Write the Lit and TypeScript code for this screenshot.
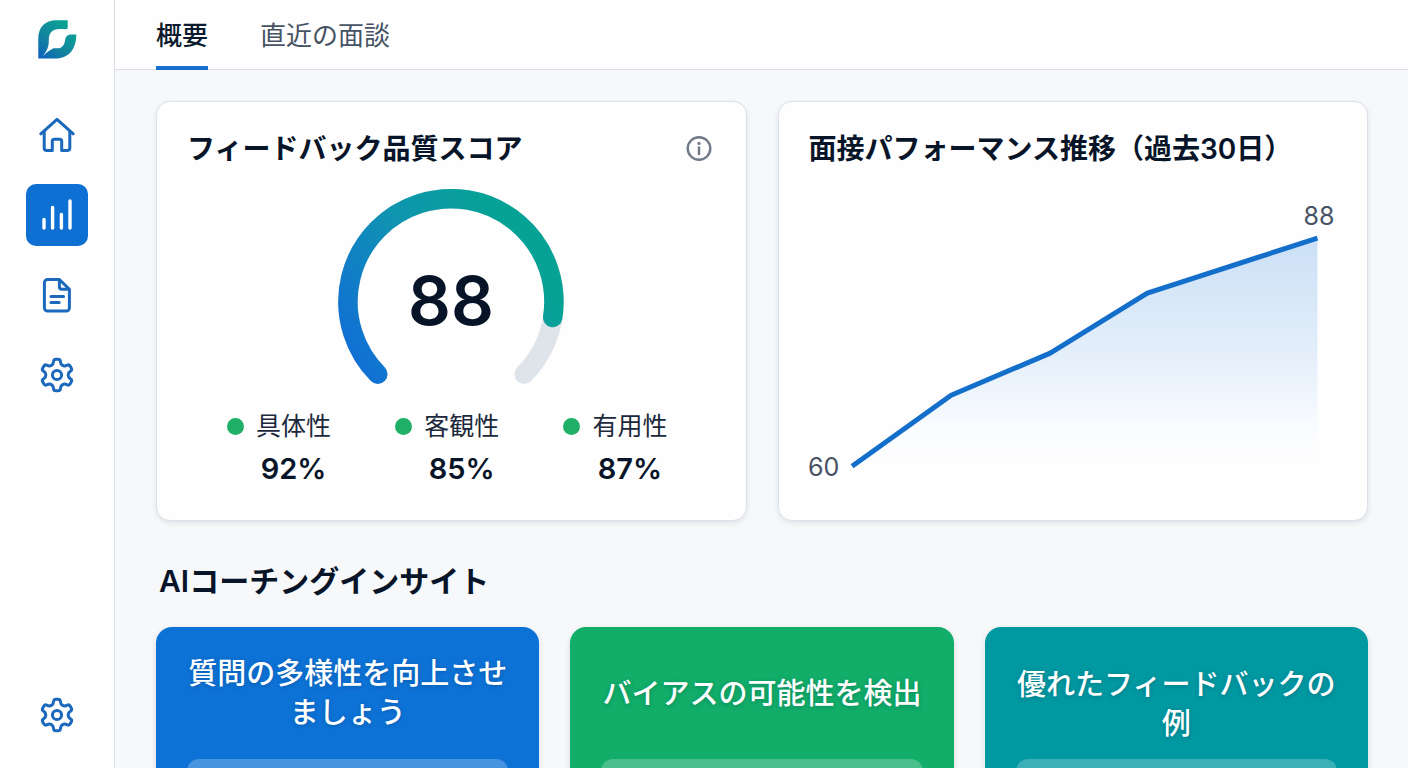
import { LitElement, html, css, svg } from "lit";
import { customElement, state } from "lit/decorators.js";
import { classMap } from "lit/directives/class-map.js";

const TOOTH_COUNT = 6;

/** Outline of a cog centred on (20, 20), with every corner rounded. */
function gearPath(): string {
  const points: [number, number][] = [];
  for (let i = 0; i < TOOTH_COUNT; i++) {
    const mid = -90 + (360 / TOOTH_COUNT) * i;
    for (const [radius, offset] of [[11.4, -18], [16.2, -12], [16.2, 12], [11.4, 18]]) {
      const a = ((mid + offset) * Math.PI) / 180;
      points.push([20 + radius * Math.cos(a), 20 + radius * Math.sin(a)]);
    }
  }
  const toward = (a: [number, number], b: [number, number], d: number) => {
    const length = Math.hypot(b[0] - a[0], b[1] - a[1]);
    const t = Math.min(d / length, 0.5);
    return `${(a[0] + (b[0] - a[0]) * t).toFixed(2)} ${(a[1] + (b[1] - a[1]) * t).toFixed(2)}`;
  };
  const n = points.length;
  return (
    points
      .map((p, i) => {
        const before = toward(p, points[(i + n - 1) % n], 2.4);
        const after = toward(p, points[(i + 1) % n], 2.4);
        return `${i ? "L" : "M"}${before}Q${p[0].toFixed(2)} ${p[1].toFixed(2)} ${after}`;
      })
      .join("") + "Z"
  );
}

const gear = svg`<path d=${gearPath()} /><circle cx="20" cy="20" r="4.6" />`;

const icons: Record<string, unknown> = {
  home: svg`<path d="M3.8 18.8 20 4.4l16.2 14.4" /><path d="M7.2 16.500v16.400a2.600 2.600 0 0 0 2.600 2.600h5.500v-9.200a2 2 0 0 1 2-2h5.400a2 2 0 0 1 2 2v9.200h5.500a2.600 2.600 0 0 0 2.600-2.600V16.500" />`,
  chart: svg`<path d="M7 33V24.5M15.6 33V12.5M24.4 33V19.5M33 33V6" />`,
  document: svg`<path d="M22.400 4.500H10.600a3.200 3.200 0 0 0-3.200 3.200v25.200a3.200 3.200 0 0 0 3.200 3.200h18.600a3.200 3.200 0 0 0 3.200-3.200V14.300zV11.700a2.600 2.600 0 0 0 2.600 2.600h7.400M14 21.500h12.600M14 27.500h8.200" />`,
  gear,
};

interface NavItem {
  id: string;
  icon: string;
  label: string;
}

const navItems: NavItem[] = [
  { id: "home", icon: "home", label: "ホーム" },
  { id: "analytics", icon: "chart", label: "分析" },
  { id: "documents", icon: "document", label: "ドキュメント" },
  { id: "preferences", icon: "gear", label: "設定" },
];

const metrics = [
  { label: "具体性", value: 92 },
  { label: "客観性", value: 85 },
  { label: "有用性", value: 87 },
];

const insights = [
  { title: "質問の多様性を向上させましょう", tone: "blue" },
  { title: "バイアスの可能性を検出", tone: "green" },
  { title: "優れたフィードバックの例", tone: "teal" },
];

@customElement("app-sidebar")
export class AppSidebar extends LitElement {
  static styles = css`
    :host {
      display: block;
      flex: none;
    }
    .rail {
      box-sizing: border-box;
      width: 115px;
      height: 100%;
      padding: 20px 0 22px;
      display: flex;
      flex-direction: column;
      align-items: center;
      background: #fefefe;
      border-right: 1px solid #d9dde5;
    }
    .logo {
      display: block;
      margin-bottom: 45px;
    }
    .list {
      flex: 1;
      display: flex;
      flex-direction: column;
      gap: 18px;
    }
    .item {
      width: 62px;
      height: 62px;
      padding: 0;
      border: 0;
      border-radius: 10px;
      background: none;
      color: #1b68bd;
      display: grid;
      place-items: center;
      cursor: pointer;
    }
    .item.active {
      background: #0f70d3;
      color: #fff;
    }
    .item.last {
      margin-top: auto;
    }
    .icon {
      width: 40px;
      height: 40px;
      fill: none;
      stroke: currentColor;
      stroke-width: 3;
      stroke-linecap: round;
      stroke-linejoin: round;
    }
    .active .icon {
      stroke-width: 3.4;
    }
  `;

  @state() private active = "analytics";

  private renderItem(item: NavItem, last = false) {
    return html`<button
      type="button"
      class=${classMap({ item: true, active: this.active === item.id, last })}
      aria-label=${item.label}
      @click=${() => (this.active = item.id)}
    >
      <svg class="icon" viewBox="0 0 40 40" aria-hidden="true">${icons[item.icon]}</svg>
    </button>`;
  }

  render() {
    return html`<nav class="rail">
      <svg class="logo" width="39" height="39" viewBox="0 0 39 39" aria-hidden="true">
        <defs>
          <linearGradient id="leaf" x1="0" y1="1" x2="0.75" y2="0.1">
            <stop offset="0" stop-color="#0b5fbe" />
            <stop offset="0.45" stop-color="#12829f" />
            <stop offset="1" stop-color="#0ba394" />
          </linearGradient>
        </defs>
        <path
          fill="url(#leaf)"
          d="M.3 38.500V18C.3 7 7.500.2 18 .2H29.700V7.500C29.700 8.500 29 9 28 9H21.500C14.500 9 10.800 13 10.800 19.500V22C10.800 27 8.500 31.500 4.800 36.500C8 32.800 11 30.500 15.500 28.300H19.500C24 28.300 26.500 25 27 20.500C27.400 16.800 29.500 14.500 33 14.500H38.300C38.300 29 31 38.500 17.500 38.500Z"
        />
      </svg>
      <div class="list">
        ${navItems.map((item) => this.renderItem(item))}
        ${this.renderItem({ id: "system", icon: "gear", label: "システム設定" }, true)}
      </div>
    </nav>`;
  }
}

@customElement("score-card")
export class ScoreCard extends LitElement {
  static styles = css`
    :host {
      display: block;
    }
    .head {
      display: flex;
      align-items: center;
      justify-content: space-between;
    }
    .title {
      margin: 0;
      font-size: 28px;
      line-height: 34px;
      font-weight: 600;
    }
    .info {
      width: 34px;
      height: 34px;
      padding: 0;
      border: 0;
      background: none;
      color: #6f7987;
      display: grid;
      place-items: center;
      cursor: pointer;
    }
    .gauge {
      display: block;
      width: 226px;
      margin: 22px auto 26px;
    }
    .score {
      font-size: 67px;
      font-weight: 600;
      text-anchor: middle;
      fill: #071428;
    }
    .metrics {
      display: flex;
      justify-content: space-between;
      margin: 0;
      padding: 0 48px 0 40px;
    }
    .metric {
      display: grid;
      grid-template-columns: 17px auto;
      column-gap: 12px;
      row-gap: 6px;
      align-items: center;
    }
    .dot {
      width: 17px;
      height: 17px;
      border-radius: 50%;
      background: #1faf66;
    }
    .name {
      font-size: 25px;
      line-height: 32px;
      color: #1c293c;
    }
    .value {
      grid-column: 2;
      margin: 0;
      text-align: center;
      font-size: 29px;
      line-height: 42px;
      font-weight: 600;
    }
  `;

  render() {
    return html`
      <div class="head">
        <h2 class="title">フィードバック品質スコア</h2>
        <button class="info" type="button" aria-label="スコアについて">
          <svg width="26" height="26" viewBox="0 0 26 26" fill="none" stroke="currentColor" stroke-width="2.4" stroke-linecap="round" aria-hidden="true">
            <circle cx="13" cy="12.500" r="11.300" />
            <path d="M13 11.500v6.500" />
            <circle cx="13" cy="7.400" r="1.600" fill="currentColor" stroke="none" />
          </svg>
        </button>
      </div>
      <svg class="gauge" viewBox="0 0 226 196" role="img" aria-label="スコア 88">
        <defs>
          <linearGradient id="arc" gradientUnits="userSpaceOnUse" x1="30" y1="190" x2="196" y2="84">
            <stop offset="0" stop-color="#1170d4" />
            <stop offset="0.55" stop-color="#0f94b0" />
            <stop offset="1" stop-color="#07a296" />
          </linearGradient>
        </defs>
        <g fill="none" stroke-width="19.5" stroke-linecap="round">
          <path stroke="#dfe3ea" d="M39.800 186.200A103 103 0 1 1 186.200 186.200" />
          <path stroke="url(#arc)" d="M39.800 186.200A103 103 0 1 1 214.700 129.500" />
        </g>
        <text class="score" x="113" y="137">88</text>
      </svg>
      <dl class="metrics">
        ${metrics.map(
          (m) => html`<div class="metric">
            <span class="dot"></span>
            <dt class="name">${m.label}</dt>
            <dd class="value">${m.value}%</dd>
          </div>`
        )}
      </dl>
    `;
  }
}

@customElement("trend-card")
export class TrendCard extends LitElement {
  static styles = css`
    :host {
      display: block;
    }
    .title {
      margin: 0;
      font-size: 28px;
      line-height: 34px;
      font-weight: 600;
    }
    .plot {
      display: block;
      width: 100%;
      margin-top: 22px;
    }
    .tick {
      font-size: 25px;
      fill: #465164;
    }
    .line {
      fill: none;
      stroke: #146fca;
      stroke-width: 5;
      stroke-linejoin: round;
    }
  `;

  render() {
    const line = "43 278 142 207 241 165 338 105 508 50";
    return html`
      <h2 class="title">面接パフォーマンス推移（過去30日）</h2>
      <svg class="plot" viewBox="0 0 528 296" role="img" aria-label="60から88へ上昇">
        <defs>
          <linearGradient id="fade" gradientUnits="userSpaceOnUse" x1="0" y1="50" x2="0" y2="278">
            <stop offset="0" stop-color="#cbe0f6" />
            <stop offset="0.5" stop-color="#e3eefa" />
            <stop offset="0.85" stop-color="#fafcff" />
            <stop offset="1" stop-color="#fefefe" />
          </linearGradient>
        </defs>
        <polygon fill="url(#fade)" points="${line} 508 278 43 278" />
        <polyline class="line" points=${line} />
        <text class="tick" x="494" y="37">88</text>
        <text class="tick" x="-1" y="288">60</text>
      </svg>
    `;
  }
}

@customElement("insight-card")
export class InsightCard extends LitElement {
  static properties = {
    heading: { type: String },
    tone: { type: String },
  };

  static styles = css`
    :host {
      display: block;
    }
    .card {
      min-height: 320px;
      padding: 0 31px 31px;
      border-radius: 16px;
      color: #fff;
      box-shadow: 0 2px 6px rgba(20, 40, 80, 0.12);
    }
    .blue {
      background: #0d72d5;
    }
    .green {
      background: #11ad69;
    }
    .teal {
      background: #0098a1;
    }
    .top {
      box-sizing: border-box;
      height: 132px;
      padding: 16px 0;
      display: flex;
      align-items: center;
      justify-content: center;
    }
    .teal .top {
      align-items: flex-end;
    }
    .title {
      margin: 0;
      text-align: center;
      font-size: 29px;
      line-height: 39px;
      font-weight: 500;
      text-shadow: 0 1px 4px rgba(0, 30, 60, 0.25);
    }
    .panel {
      height: 156px;
      border-radius: 12px;
      background: rgba(255, 255, 255, 0.24);
    }
  `;

  declare heading: string;
  declare tone: string;

  render() {
    return html`<article class="card ${this.tone}">
      <div class="top"><h3 class="title">${this.heading}</h3></div>
      <div class="panel"></div>
    </article>`;
  }
}

@customElement("app-root")
export class AppRoot extends LitElement {
  static styles = css`
    :host {
      display: flex;
      height: 100vh;
      overflow: hidden;
      background: #f6f8f9;
      color: #081529;
      font-family: Inter, "Noto Sans CJK JP", sans-serif;
    }
    .page {
      flex: 1;
      min-width: 0;
      display: flex;
      flex-direction: column;
    }
    .tabs {
      box-sizing: border-box;
      flex: none;
      height: 70px;
      padding: 0 41px;
      display: flex;
      gap: 52px;
      background: #fefefe;
      border-bottom: 1px solid #d9dde5;
    }
    .tab {
      margin-bottom: -1px;
      padding: 0;
      border: 0;
      border-bottom: 4px solid transparent;
      background: none;
      font: inherit;
      font-size: 26px;
      color: #465364;
      cursor: pointer;
    }
    .tab.active {
      color: #0d1b2e;
      font-weight: 500;
      border-bottom-color: #1570cf;
    }
    .content {
      flex: 1;
      min-height: 0;
      overflow-y: auto;
      scrollbar-width: none;
      padding: 31px 40px 40px 41px;
    }
    .overview {
      display: grid;
      grid-template-columns: repeat(2, minmax(0, 1fr));
      gap: 31px;
    }
    .panel {
      padding: 30px;
      border: 1px solid #dde1e9;
      border-radius: 14px;
      background: #fefefe;
      box-shadow: 0 2px 5px rgba(30, 50, 90, 0.1);
    }
    .heading {
      margin: 40px 0 26px;
      padding-left: 3px;
      font-size: 30px;
      line-height: 40px;
      font-weight: 600;
    }
    .insights {
      display: grid;
      grid-template-columns: repeat(3, minmax(0, 1fr));
      gap: 31px;
    }
  `;

  @state() private tab = "概要";

  render() {
    return html`
      <app-sidebar></app-sidebar>
      <div class="page">
        <div class="tabs" role="tablist">
          ${["概要", "直近の面談"].map(
            (name) => html`<button
              type="button"
              role="tab"
              aria-selected=${this.tab === name ? "true" : "false"}
              class=${classMap({ tab: true, active: this.tab === name })}
              @click=${() => (this.tab = name)}
            >${name}</button>`
          )}
        </div>
        <main class="content">
          <div class="overview">
            <score-card class="panel"></score-card>
            <trend-card class="panel"></trend-card>
          </div>
          <h2 class="heading">AIコーチングインサイト</h2>
          <div class="insights">
            ${insights.map((i) => html`<insight-card .heading=${i.title} .tone=${i.tone}></insight-card>`)}
          </div>
        </main>
      </div>
    `;
  }
}
